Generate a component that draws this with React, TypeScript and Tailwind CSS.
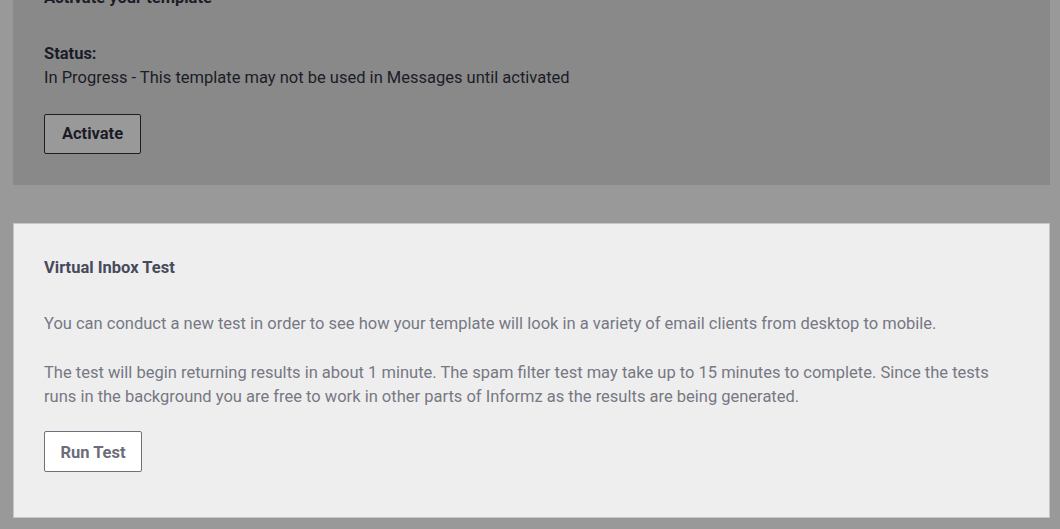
import React from 'react';

// Template settings: activation card (dimmed) and the virtual inbox test card
const ActivateCard: React.FC = () => {
    return (
        <div className="bg-[#898989] px-[31px] pb-[31px] text-[#1b1c27]">
            <h3 className="font-bold leading-6 -mt-[14px]">Activate your template</h3>
            <div className="mt-8">
                <p className="font-bold leading-6">Status:</p>
                <p className="leading-6">In Progress - This template may not be used in Messages until activated</p>
            </div>
            <button
                type="button"
                className="mt-6 h-10 w-[97px] rounded-[2px] border border-[#1c1d26] bg-[#999999] font-bold text-[#1b1c27]"
            >
                Activate
            </button>
        </div>
    );
};

const InboxTestCard: React.FC = () => {
    return (
        <div className="mt-[38px] border border-[#c6c6c6] bg-[#eeeeee] pl-[30px] pr-4 pt-8 pb-[45px]">
            <h3 className="font-bold leading-6 text-[#474a5c]">Virtual Inbox Test</h3>
            <div className="mt-8 space-y-[25px] leading-6 text-[#767884]">
                <p>You can conduct a new test in order to see how your template will look in a variety of email clients from desktop to mobile.</p>
                <p>
                    The test will begin returning results in about 1 minute. The spam filter test may take up to 15 minutes to complete. Since the tests
                    <br />
                    runs in the background you are free to work in other parts of Informz as the results are being generated.
                </p>
            </div>
            <button
                type="button"
                className="mt-[22px] h-[41px] w-[98px] rounded-[2px] border border-[#6f707c] bg-white pt-[3px] font-bold text-[#6b6d7a]"
            >
                Run Test
            </button>
        </div>
    );
};

export default function App() {
    return (
        <div className="h-[529px] overflow-hidden bg-[#999999] pl-[13px] pr-[10px] font-['Roboto',sans-serif] text-[16.5px]">
            <ActivateCard />
            <InboxTestCard />
        </div>
    );
}
